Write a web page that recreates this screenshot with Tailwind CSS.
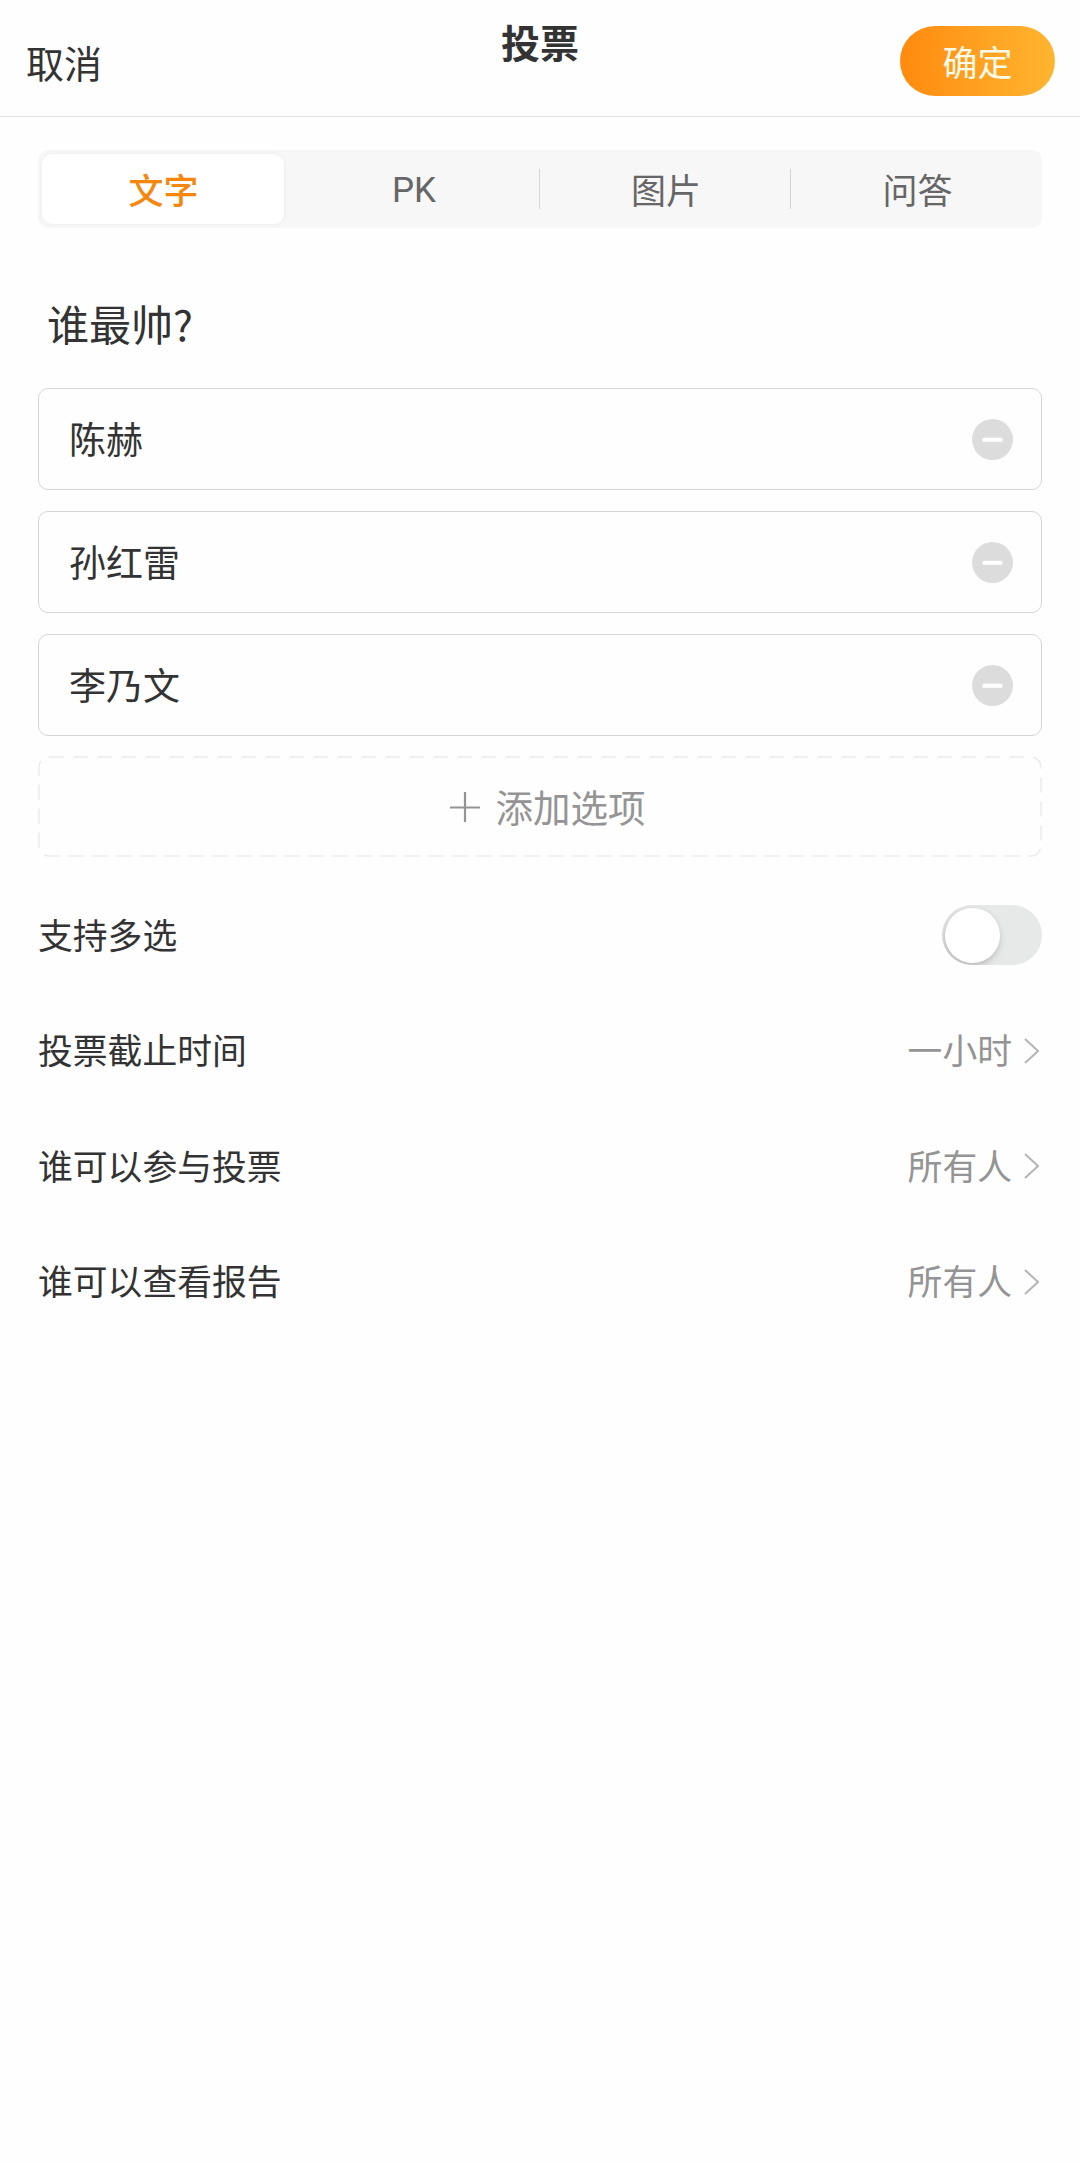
<!DOCTYPE html>
<html lang="zh-CN">
<head>
  <meta charset="UTF-8">
  <meta name="viewport" content="width=device-width, initial-scale=1.0">
  <title>投票</title>
  <script src="https://cdn.jsdelivr.net/npm/@tailwindcss/browser@4"></script>
</head>
<body class="min-h-[2163px] bg-[#fefefe] font-['Noto_Sans_CJK_SC',sans-serif] text-[#333]">
  <!-- Header -->
  <header class="grid h-[117px] grid-cols-3 items-start border-b border-[#e2e4e4]">
    <button class="mt-[42px] ml-[26px] justify-self-start text-[38px] leading-10">取消</button>
    <h1 class="mt-[21px] text-center text-[39px] leading-10 font-bold">投票</h1>
    <button class="mt-[26px] mr-[25px] h-[70px] w-[155px] justify-self-end rounded-full bg-linear-to-r from-[#ff8a0c] to-[#ffb52f] text-[35px] leading-[68px] text-[#fffbe8]">确定</button>
  </header>

  <main class="px-[38px] pt-[33px]">
    <!-- Tabs -->
    <nav class="grid h-[78px] grid-cols-4 items-center rounded-[10px] bg-[#f7f7f7] text-center text-[35px] text-[#666]">
      <a class="mr-[5px] ml-1 h-[70px] rounded-[10px] bg-white pl-px leading-[70px] font-medium text-[#f5870f] shadow-[0_0_4px_rgba(0,0,0,0.06)]">文字</a>
      <a class="h-10 border-r border-[#d5d5d5] font-['Roboto','Noto_Sans_CJK_SC',sans-serif] leading-[43px]">PK</a>
      <a class="h-10 border-r border-[#d5d5d5] pl-0.5 leading-10">图片</a>
      <a class="h-10 pl-0.5 leading-10">问答</a>
    </nav>

    <h2 class="mt-[65px] ml-[9px] text-[42px] leading-[60px]">谁最帅?</h2>

    <!-- Options -->
    <ul class="mt-[35px] flex flex-col gap-[21px] text-[37px]">
      <li class="flex h-[102px] items-center justify-between rounded-[10px] border-[1.5px] border-[#d6d6d6] pr-[28px] pl-[30px]">
        <span>陈赫</span>
        <svg class="size-[41px]" viewBox="0 0 41 41"><circle cx="20.5" cy="20.5" r="20.5" fill="#dcdcdc"/><rect x="10.5" y="18.8" width="20" height="4" rx="1" fill="#fff"/></svg>
      </li>
      <li class="flex h-[102px] items-center justify-between rounded-[10px] border-[1.5px] border-[#d6d6d6] pr-[28px] pl-[30px]">
        <span>孙红雷</span>
        <svg class="size-[41px]" viewBox="0 0 41 41"><circle cx="20.5" cy="20.5" r="20.5" fill="#dcdcdc"/><rect x="10.5" y="18.8" width="20" height="4" rx="1" fill="#fff"/></svg>
      </li>
      <li class="flex h-[102px] items-center justify-between rounded-[10px] border-[1.5px] border-[#d6d6d6] pr-[28px] pl-[30px]">
        <span>李乃文</span>
        <svg class="size-[41px]" viewBox="0 0 41 41"><circle cx="20.5" cy="20.5" r="20.5" fill="#dcdcdc"/><rect x="10.5" y="18.8" width="20" height="4" rx="1" fill="#fff"/></svg>
      </li>
    </ul>

    <!-- Add option -->
    <button class="relative mt-[20px] flex h-[101px] w-full items-center justify-center gap-4 pl-[15px] text-[37.5px] text-[#949494]">
      <svg class="absolute inset-0 size-full" fill="none" stroke="#ebebeb" stroke-width="1.5" stroke-dasharray="15 9"><rect x="1" y="1" width="1002" height="99" rx="10"/></svg>
      <svg class="size-[30px]" viewBox="0 0 30 30" stroke="#949494" stroke-width="2.2"><path d="M0 15.5h30M15 0v30"/></svg>
      <span>添加选项</span>
    </button>

    <!-- Settings -->
    <section class="mt-[19px] text-[34.8px]">
      <div class="flex h-[116px] items-center justify-between">
        <span>支持多选</span>
        <span class="mt-0.5 flex h-[60px] w-[100px] items-center overflow-hidden rounded-full bg-[#e7e9e9] pl-[3px]">
          <i class="size-[55px] rounded-full bg-white shadow-[-1px_3px_7px_rgba(0,0,0,0.22)]"></i>
        </span>
      </div>
      <div class="flex h-[115px] items-center justify-between">
        <span>投票截止时间</span>
        <span class="flex items-center gap-3 pr-[3px] text-[#949494]">一小时 <svg class="mt-0.5 h-[26px] w-[15px]" viewBox="0 0 15 26" fill="none" stroke="#b5b5b5" stroke-width="2"><path d="M1 1l13 12L1 25"/></svg></span>
      </div>
      <div class="flex h-[116px] items-center justify-between">
        <span>谁可以参与投票</span>
        <span class="flex items-center gap-3 pr-[3px] text-[#949494]">所有人 <svg class="mt-0.5 h-[26px] w-[15px]" viewBox="0 0 15 26" fill="none" stroke="#b5b5b5" stroke-width="2"><path d="M1 1l13 12L1 25"/></svg></span>
      </div>
      <div class="flex h-[115px] items-center justify-between">
        <span>谁可以查看报告</span>
        <span class="flex items-center gap-3 pr-[3px] text-[#949494]">所有人 <svg class="mt-0.5 h-[26px] w-[15px]" viewBox="0 0 15 26" fill="none" stroke="#b5b5b5" stroke-width="2"><path d="M1 1l13 12L1 25"/></svg></span>
      </div>
    </section>
  </main>
</body>
</html>
